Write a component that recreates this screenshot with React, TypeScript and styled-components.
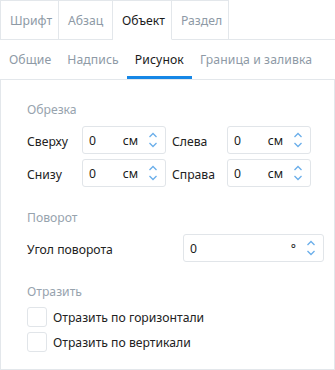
import React from "react";
import styled, { createGlobalStyle } from "styled-components";

const Global = createGlobalStyle`
  html, body { margin: 0; padding: 0; background: #fff; }
  body { font-family: "Noto Sans", "Open Sans", sans-serif; font-size: 12.2px; color: #222; }
`;

const Frame = styled.div`
  width: 335px;
  height: 370px;
  box-sizing: border-box;
  display: flex;
  flex-direction: column;
  background: #fff;
`;

const TopTabs = styled.div`
  display: flex;
  height: 40px;
  box-sizing: border-box;
`;

const TopTab = styled.div<{ $active?: boolean; $w: number }>`
  width: ${(p) => p.$w}px;
  box-sizing: border-box;
  display: flex;
  align-items: center;
  padding-left: 9px;
  padding-top: 1px;
  border-top: 1px solid #e3e7eb;
  border-right: 1px solid #e3e7eb;
  border-bottom: 1px solid ${(p) => (p.$active ? "transparent" : "#e3e7eb")};
  color: ${(p) => (p.$active ? "#1b1b1b" : "#8e9aa6")};
  &:first-child { border-left: 1px solid #e3e7eb; }
`;

const TabFill = styled.div`
  flex: 1;
  border-bottom: 1px solid #e3e7eb;
`;

const SubTabs = styled.div`
  display: flex;
  height: 39px;
  padding-left: 1px;
  box-sizing: border-box;
`;

const SubTab = styled.div<{ $active?: boolean }>`
  padding: 3px 8px 0;
  display: flex;
  align-items: center;
  box-sizing: border-box;
  color: ${(p) => (p.$active ? "#1b1b1b" : "#8e9aa6")};
  border-bottom: 3px solid ${(p) => (p.$active ? "#1687e6" : "transparent")};
  letter-spacing: 0.1px;
`;

const Panel = styled.div`
  flex: 1;
  border: 1px solid #e3e7eb;
  padding: 21px 0 0 26px;
  box-sizing: border-box;
  display: flex;
  flex-direction: column;
`;

const SectionTitle = styled.div`
  color: #97a3ae;
  height: 18px;
  line-height: 18px;
`;

const CropGrid = styled.div`
  display: grid;
  grid-template-columns: 55px 84px 6px 55px 84px;
  grid-auto-rows: 28px;
  row-gap: 5px;
  margin-top: 7px;
  align-items: center;
`;

const Label = styled.div`
  color: #222;
  padding-top: 3px;
`;

const Spin = styled.div<{ $w: number }>`
  width: ${(p) => p.$w}px;
  height: 28px;
  box-sizing: border-box;
  border: 1px solid #e1e5e9;
  border-radius: 3px;
  display: flex;
  align-items: center;
  padding-left: 6px;
  padding-right: 7px;
`;

const Value = styled.span`
  flex: 1;
  color: #1b1b1b;
  padding-top: 1px;
`;

const Unit = styled.span`
  color: #1b1b1b;
  margin-right: 10px;
  padding-top: 1px;
`;

const Arrows = styled.div`
  display: flex;
  flex-direction: column;
  gap: 4px;
  width: 10px;
  align-items: center;
`;

const RotRow = styled.div`
  display: flex;
  align-items: center;
  justify-content: space-between;
  width: 297px;
  margin-top: 7px;
`;

const Gap = styled.div<{ $h: number }>`
  height: ${(p) => p.$h}px;
`;

const CheckList = styled.div`
  display: flex;
  flex-direction: column;
  gap: 5px;
  margin-top: 6px;
`;

const CheckRow = styled.label`
  display: flex;
  align-items: center;
  gap: 6px;
`;

const Box = styled.span`
  width: 20px;
  height: 20px;
  box-sizing: border-box;
  border: 1px solid #e1e5e9;
  border-radius: 3px;
`;

const Chevrons = () => (
  <Arrows>
    <svg width="10" height="6" viewBox="0 0 10 6">
      <path d="M1.5 5 L5 1.5 L8.5 5" fill="none" stroke="#6aaeea" strokeWidth="1.3" />
    </svg>
    <svg width="10" height="6" viewBox="0 0 10 6">
      <path d="M1.5 1 L5 4.5 L8.5 1" fill="none" stroke="#6aaeea" strokeWidth="1.3" />
    </svg>
  </Arrows>
);

const CmInput = () => (
  <Spin $w={84}>
    <Value>0</Value>
    <Unit>см</Unit>
    <Chevrons />
  </Spin>
);

export default function App() {
  return (
    <Frame>
      <Global />
      <TopTabs>
        <TopTab $w={59}>Шрифт</TopTab>
        <TopTab $w={54}>Абзац</TopTab>
        <TopTab $w={59} $active>Объект</TopTab>
        <TopTab $w={57}>Раздел</TopTab>
        <TabFill />
      </TopTabs>
      <SubTabs>
        <SubTab>Общие</SubTab>
        <SubTab>Надпись</SubTab>
        <SubTab $active>Рисунок</SubTab>
        <SubTab>Граница и заливка</SubTab>
      </SubTabs>
      <Panel>
        <SectionTitle>Обрезка</SectionTitle>
        <CropGrid>
          <Label>Сверху</Label>
          <CmInput />
          <span />
          <Label>Слева</Label>
          <CmInput />
          <Label>Снизу</Label>
          <CmInput />
          <span />
          <Label>Справа</Label>
          <CmInput />
        </CropGrid>
        <Gap $h={22} />
        <SectionTitle>Поворот</SectionTitle>
        <RotRow>
          <Label>Угол поворота</Label>
          <Spin $w={141}>
            <Value>0</Value>
            <Unit>°</Unit>
            <Chevrons />
          </Spin>
        </RotRow>
        <Gap $h={21} />
        <SectionTitle>Отразить</SectionTitle>
        <CheckList>
          <CheckRow>
            <Box />
            Отразить по горизонтали
          </CheckRow>
          <CheckRow>
            <Box />
            Отразить по вертикали
          </CheckRow>
        </CheckList>
      </Panel>
    </Frame>
  );
}
